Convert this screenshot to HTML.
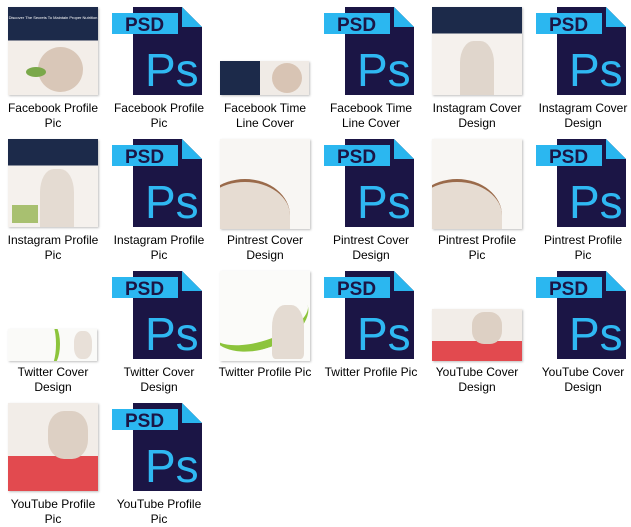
<!DOCTYPE html>
<html><head><meta charset="utf-8"><style>
body{margin:0;width:631px;height:526px;background:#fff;position:relative;overflow:hidden;font-family:"Liberation Sans",sans-serif}
.l{position:absolute;width:106px;text-align:center;font-size:12px;line-height:15px;color:#000}
.t{position:absolute;overflow:hidden;box-shadow:1px 1px 2px rgba(0,0,0,.25)}
.p{position:absolute;width:91px;height:89px}
.w{position:absolute;background:#ede8e2}
.d{font-size:4px;line-height:5px;text-align:center;color:#fff;position:absolute;left:0;right:0}
</style></head><body>
<svg width="0" height="0" style="position:absolute"><defs><g id="psd">
<path d="M21 0H70L90 20V88H21Z" fill="#1b1545"/>
<path d="M70 0L90 20H70Z" fill="#29b5ee"/>
<rect x="0" y="6" width="66" height="21" fill="#2bb7f0"/>
<text x="13" y="24" font-family="Liberation Sans" font-weight="bold" font-size="19" fill="#1b1545">PSD</text>
<text x="33" y="79" font-family="Liberation Sans" font-size="46" fill="#2fb8f2">Ps</text>
</g></defs></svg>

<!-- row 1 -->
<div class="t" style="left:8px;top:7px;width:90px;height:88px;background:linear-gradient(#1c2a4a 0 38%,#f3eee9 38%)"><div class="d" style="top:8px">Discover The Secrets To Maintain Proper Nutrition</div><div class="w" style="left:30px;top:40px;width:45px;height:45px;border-radius:50%;background:#d9c7b8"></div><div style="position:absolute;left:18px;top:60px;width:20px;height:10px;border-radius:50%;background:#7aa84a"></div></div>
<svg class="p" style="left:112px;top:7px"><use href="#psd"/></svg>
<div class="t" style="left:220px;top:61px;width:89px;height:34px;background:linear-gradient(90deg,#1c2a4a 0 45%,#f0ebe6 45%)"><div class="w" style="left:52px;top:2px;width:30px;height:30px;border-radius:50%;background:#d8c4b4"></div></div>
<svg class="p" style="left:324px;top:7px"><use href="#psd"/></svg>
<div class="t" style="left:432px;top:7px;width:90px;height:88px;background:linear-gradient(#1c2a4a 0 30%,#f5f1ed 30%)"><div class="w" style="left:28px;top:34px;width:34px;height:54px;border-radius:40% 40% 0 0;background:#e0d6cc"></div></div>
<svg class="p" style="left:536px;top:7px"><use href="#psd"/></svg>
<div class="l" style="left:0;top:101px">Facebook Profile<br>Pic</div>
<div class="l" style="left:106px;top:101px">Facebook Profile<br>Pic</div>
<div class="l" style="left:212px;top:101px">Facebook Time<br>Line Cover</div>
<div class="l" style="left:318px;top:101px">Facebook Time<br>Line Cover</div>
<div class="l" style="left:424px;top:101px">Instagram Cover<br>Design</div>
<div class="l" style="left:530px;top:101px">Instagram Cover<br>Design</div>

<!-- row 2 -->
<div class="t" style="left:8px;top:139px;width:90px;height:88px;background:linear-gradient(#1c2a4a 0 30%,#f5f1ed 30%)"><div class="w" style="left:32px;top:30px;width:34px;height:58px;border-radius:40% 40% 0 0;background:#e4dbd2"></div><div style="position:absolute;left:4px;top:66px;width:26px;height:18px;background:#a8c070"></div></div>
<svg class="p" style="left:112px;top:139px"><use href="#psd"/></svg>
<div class="t" style="left:220px;top:139px;width:90px;height:90px;background:#f8f6f3"><div class="w" style="left:-20px;top:40px;width:90px;height:70px;border-radius:50% 50% 0 0;background:#e6dcd2;border-top:3px solid #9a6a4a"></div></div>
<svg class="p" style="left:324px;top:139px"><use href="#psd"/></svg>
<div class="t" style="left:432px;top:139px;width:90px;height:90px;background:#f8f6f3"><div class="w" style="left:-20px;top:40px;width:90px;height:70px;border-radius:50% 50% 0 0;background:#e6dcd2;border-top:3px solid #9a6a4a"></div></div>
<svg class="p" style="left:536px;top:139px"><use href="#psd"/></svg>
<div class="l" style="left:0;top:233px">Instagram Profile<br>Pic</div>
<div class="l" style="left:106px;top:233px">Instagram Profile<br>Pic</div>
<div class="l" style="left:212px;top:233px">Pintrest Cover<br>Design</div>
<div class="l" style="left:318px;top:233px">Pintrest Cover<br>Design</div>
<div class="l" style="left:424px;top:233px">Pintrest Profile<br>Pic</div>
<div class="l" style="left:530px;top:233px">Pintrest Profile<br>Pic</div>

<!-- row 3 -->
<div class="t" style="left:8px;top:329px;width:89px;height:32px;background:#fafaf8"><div style="position:absolute;left:28px;top:-10px;width:20px;height:50px;border-right:4px solid #8cc43c;border-radius:50%"></div><div class="w" style="left:66px;top:2px;width:18px;height:28px;border-radius:40%;background:#e8e0d8"></div></div>
<svg class="p" style="left:112px;top:271px"><use href="#psd"/></svg>
<div class="t" style="left:220px;top:271px;width:90px;height:90px;background:#fbfbf9"><div style="position:absolute;left:-10px;top:20px;width:100px;height:50px;border-bottom:8px solid #8cc43c;border-radius:50%;transform:rotate(-18deg)"></div><div class="w" style="left:52px;top:34px;width:32px;height:54px;border-radius:40% 40% 10% 10%;background:#e4dbd2"></div></div>
<svg class="p" style="left:324px;top:271px"><use href="#psd"/></svg>
<div class="t" style="left:432px;top:309px;width:90px;height:52px;background:linear-gradient(#f2ede8 0 62%,#e24a4f 62%)"><div class="w" style="left:40px;top:3px;width:30px;height:32px;border-radius:40%;background:#ddd0c4"></div></div>
<svg class="p" style="left:536px;top:271px"><use href="#psd"/></svg>
<div class="l" style="left:0;top:365px">Twitter Cover<br>Design</div>
<div class="l" style="left:106px;top:365px">Twitter Cover<br>Design</div>
<div class="l" style="left:212px;top:365px">Twitter Profile Pic</div>
<div class="l" style="left:318px;top:365px">Twitter Profile Pic</div>
<div class="l" style="left:424px;top:365px">YouTube Cover<br>Design</div>
<div class="l" style="left:530px;top:365px">YouTube Cover<br>Design</div>

<!-- row 4 -->
<div class="t" style="left:8px;top:403px;width:90px;height:88px;background:linear-gradient(#f2ede8 0 60%,#e24a4f 60%)"><div class="w" style="left:40px;top:8px;width:40px;height:48px;border-radius:40%;background:#ddd0c4"></div></div>
<svg class="p" style="left:112px;top:403px"><use href="#psd"/></svg>
<div class="l" style="left:0;top:497px">YouTube Profile<br>Pic</div>
<div class="l" style="left:106px;top:497px">YouTube Profile<br>Pic</div>
</body></html>
